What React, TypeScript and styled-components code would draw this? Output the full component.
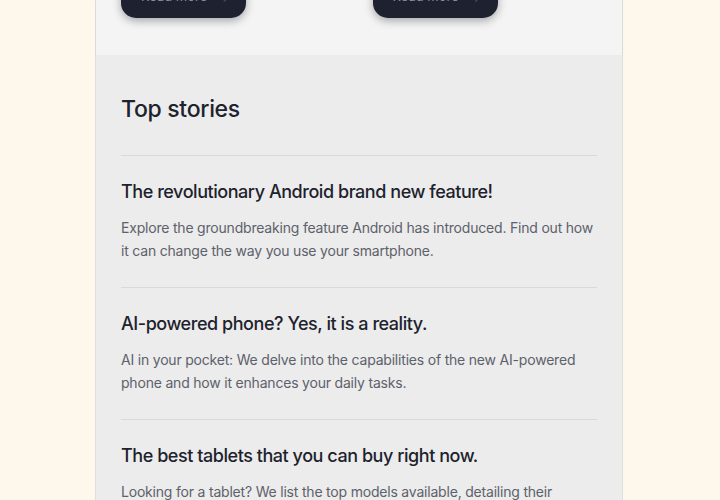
import React from "react";
import styled, { createGlobalStyle } from "styled-components";

const GlobalStyle = createGlobalStyle`
  html, body {
    margin: 0;
    padding: 0;
    background: #fef7ec;
    font-family: "Inter", "Noto Sans", sans-serif;
    overflow: hidden;
  }
`;

interface Story {
  title: string;
  summary: string;
}

const stories: Story[] = [
  {
    title: "The revolutionary Android brand new feature!",
    summary:
      "Explore the groundbreaking feature Android has introduced. Find out how it can change the way you use your smartphone.",
  },
  {
    title: "AI-powered phone? Yes, it is a reality.",
    summary:
      "AI in your pocket: We delve into the capabilities of the new AI-powered phone and how it enhances your daily tasks.",
  },
  {
    title: "The best tablets that you can buy right now.",
    summary:
      "Looking for a tablet? We list the top models available, detailing their features, prices and who each one is best for.",
  },
];

const Page = styled.div`
  display: flex;
  justify-content: center;
  height: 500px;
  overflow: hidden;
`;

const Panel = styled.div`
  width: 528px;
  margin-left: -2px;
  border-left: 1px solid #dedede;
  border-right: 1px solid #dedede;
  box-sizing: border-box;
  display: flex;
  flex-direction: column;
`;

const Featured = styled.section`
  background: #f4f4f4;
  height: 55px;
  flex-shrink: 0;
  padding: 0 25px;
  display: grid;
  grid-template-columns: 1fr 1fr;
  column-gap: 27px;
  align-content: end;
  align-items: end;
  box-shadow: 0 1px 3px rgba(0, 0, 0, 0.04);
`;

const ReadMore = styled.button`
  width: 125px;
  height: 40px;
  margin-bottom: 37px;
  border: none;
  border-radius: 15px;
  background: #1e2230;
  box-shadow: 0 3px 8px rgba(20, 24, 36, 0.35);
  color: #8a8d96;
  font-family: inherit;
  font-size: 13px;
  display: flex;
  align-items: flex-end;
  justify-content: space-between;
  padding: 0 16px 14px 20px;
  box-sizing: border-box;
`;

const ReadArrow = styled.span`
  color: #2b5a78;
  font-size: 14px;
  line-height: 1;
`;

const Stories = styled.section`
  background: #ececec;
  flex: 1;
  padding: 38px 25px 0;
`;

const SectionTitle = styled.h2`
  margin: 0;
  font-size: 23px;
  line-height: 32px;
  font-weight: 500;
  color: #1d222c;
  letter-spacing: -0.3px;
  padding-bottom: 30px;
  border-bottom: 1px solid #d9d9d9;
`;

const StoryItem = styled.article`
  padding: 23px 0 25px;
  border-bottom: 1px solid #d9d9d9;
`;

const StoryTitle = styled.h3`
  margin: 0 0 11px;
  font-size: 18px;
  line-height: 26px;
  font-weight: 500;
  color: #1d222c;
  letter-spacing: -0.45px;
`;

const StorySummary = styled.p`
  margin: 0;
  font-size: 14px;
  line-height: 23px;
  color: #5d616b;
  letter-spacing: -0.2px;
`;

const App: React.FC = () => {
  return (
    <Page>
      <GlobalStyle />
      <Panel>
        <Featured>
          <ReadMore>
            Read more <ReadArrow>→</ReadArrow>
          </ReadMore>
          <ReadMore>
            Read more <ReadArrow>→</ReadArrow>
          </ReadMore>
        </Featured>
        <Stories>
          <SectionTitle>Top stories</SectionTitle>
          {stories.map((s) => (
            <StoryItem key={s.title}>
              <StoryTitle>{s.title}</StoryTitle>
              <StorySummary>{s.summary}</StorySummary>
            </StoryItem>
          ))}
        </Stories>
      </Panel>
    </Page>
  );
};

export default App;
